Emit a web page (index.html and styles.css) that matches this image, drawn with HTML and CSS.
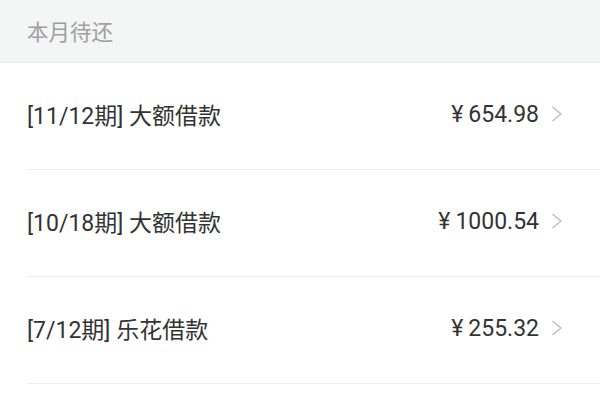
FILE: index.html
```html
<!DOCTYPE html>
<html lang="zh-CN">
<head>
  <meta charset="UTF-8" />
  <title>本月待还</title>
  <meta name="viewport" content="width=device-width, initial-scale=1" />
  <link rel="stylesheet" href="styles.css">
</head>
<body>

  <div class="section-title">本月待还</div>

  <ul class="bill-list">
    <li class="bill-item">
      <span class="bill-name">[11/12期] 大额借款</span>
      <span class="bill-amount"><span class="yen">¥</span>654.98</span>
      <svg class="arrow" width="12" height="16" viewBox="0 0 12 16"><path d="M1.5 1 L10 8 L1.5 15" fill="none" stroke="#bdbdbd" stroke-width="1.4"/></svg>
    </li>
    <li class="bill-item">
      <span class="bill-name">[10/18期] 大额借款</span>
      <span class="bill-amount"><span class="yen">¥</span>1000.54</span>
      <svg class="arrow" width="12" height="16" viewBox="0 0 12 16"><path d="M1.5 1 L10 8 L1.5 15" fill="none" stroke="#bdbdbd" stroke-width="1.4"/></svg>
    </li>
    <li class="bill-item">
      <span class="bill-name">[7/12期] 乐花借款</span>
      <span class="bill-amount"><span class="yen">¥</span>255.32</span>
      <svg class="arrow" width="12" height="16" viewBox="0 0 12 16"><path d="M1.5 1 L10 8 L1.5 15" fill="none" stroke="#bdbdbd" stroke-width="1.4"/></svg>
    </li>
  </ul>

</body>
</html>
```

FILE: styles.css
```css
body {
  margin: 0;
  background: #fff;
  font-family: Roboto, "Noto Sans CJK SC", sans-serif;
  color: #333;
}

/* 顶部分组标题 */
.section-title {
  height: 61px;
  padding-left: 27px;
  padding-bottom: 1px;
  display: flex;
  align-items: center;
  background: #f4f5f5;
  border-bottom: 1px solid #e9eaea;
  color: #a0a0a0;
  font-size: 21.5px;
}

.bill-list {
  list-style: none;
  margin: 0;
  padding: 0;
}

.bill-item {
  height: 102px;
  padding-bottom: 4px;
  margin-left: 27px;
  padding-right: 37px;
  display: flex;
  align-items: center;
  border-bottom: 1px solid #eeeeee;
  font-size: 23px;
}

.bill-name {
  flex: 1;
}

.bill-amount {
  font-size: 23px;
}

.yen {
  margin-right: 5px;
}

.arrow {
  margin-left: 12px;
}
```
